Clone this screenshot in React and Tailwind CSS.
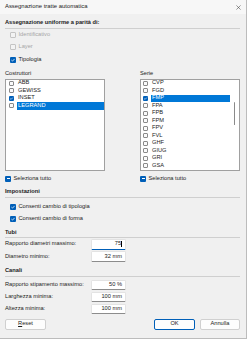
import React from "react";

function Check({ state = "off", disabled = false, size = 6 }) {
  const sz = size === 6 ? "w-[6px] h-[6px]" : "w-[5px] h-[5px]";
  if (state === "off") {
    return (
      <span
        className={`${sz} shrink-0 rounded-[1px] border-[0.7px] ${
          disabled ? "border-[#c4c4c4] bg-[#f3f3f3]" : "border-[#8a8a8a] bg-[#fafafa]"
        }`}
      />
    );
  }
  return (
    <span className={`${sz} shrink-0 rounded-[1px] bg-[#005fb8] flex items-center justify-center`}>
      {state === "on" ? (
        <svg viewBox="0 0 6 6" className="w-full h-full">
          <path d="M1.4 3.1 L2.5 4.1 L4.6 1.9" fill="none" stroke="white" strokeWidth="0.75" />
        </svg>
      ) : (
        <span className="w-[3px] h-[0.8px] bg-white" />
      )}
    </span>
  );
}

function Header({ children, className = "" }) {
  return (
    <div className={`h-[9.5px] flex items-center font-bold border-b border-[#cfcfcf] ${className}`}>
      {children}
    </div>
  );
}

function CheckRow({ label, state, disabled, h = "h-[12.5px]" }) {
  return (
    <div className={`${h} flex items-center pl-[5px] gap-[2.5px]`}>
      <Check state={state} disabled={disabled} />
      <span className={disabled ? "text-[#a6a6a6]" : ""}>{label}</span>
    </div>
  );
}

function ListRow({ label, checked, selected, pad }) {
  return (
    <div className={`h-[7.5px] flex items-center ${pad}`}>
      <Check state={checked ? "on" : "off"} size={5} />
      <span
        className={`ml-[3px] flex-1 h-full flex items-center pl-[1px] ${
          selected ? "bg-[#0078d7] text-white" : ""
        }`}
      >
        {label}
      </span>
    </div>
  );
}

function Field({ label, value, focused }) {
  return (
    <div className="h-[12.5px] flex items-center">
      <span className="w-[86px]">{label}</span>
      <div
        className={`w-[35px] h-[11px] bg-white rounded-[1.5px] border border-[#e3e3e3] flex items-center justify-end pr-[3px] ${
          focused ? "border-b-[#005fb8] border-b-[1.5px]" : "border-b-[#8c8c8c]"
        }`}
      >
        <span>{value}</span>
        {focused && <span className="w-[0.6px] h-[6px] bg-black ml-[0.3px]" />}
      </div>
    </div>
  );
}

function Field2({ label, value }) {
  return (
    <div className="h-[12px] flex items-center">
      <span className="w-[86px]">{label}</span>
      <div className="w-[35px] h-[10.5px] bg-white rounded-[1.5px] border border-[#e3e3e3] border-b-[#8c8c8c] flex items-center justify-end pr-[3px]">
        {value}
      </div>
    </div>
  );
}

export default function App() {
  const left = [
    { l: "ABB" },
    { l: "GEWISS" },
    { l: "INSET", c: true },
    { l: "LEGRAND", s: true },
  ];
  const right = [
    { l: "CVP" },
    { l: "FGD" },
    { l: "FMP", c: true, s: true },
    { l: "FPA" },
    { l: "FPB" },
    { l: "FPM" },
    { l: "FPV" },
    { l: "FVL" },
    { l: "GHF" },
    { l: "GIUG" },
    { l: "GRI" },
    { l: "GSA" },
  ];
  return (
    <div className="w-[248px] h-[340px] bg-white font-['Liberation_Sans',Arial,sans-serif] text-[5.7px] text-[#1b1b1b] leading-none">
      <div className="w-[247px] h-[339px] bg-[#f0f0f0] border-r border-b border-[#bcbcbc] flex flex-col">
        <div className="h-[14px] bg-[#f7f7f7] flex items-center justify-between pl-[5px] pr-[5px] shrink-0">
          <span className="text-[5.9px]">Assegnazione tratte automatica</span>
          <svg viewBox="0 0 6 6" className="w-[5px] h-[5px]">
            <path d="M0.5 0.5 L5.5 5.5 M5.5 0.5 L0.5 5.5" stroke="#333" strokeWidth="0.6" />
          </svg>
        </div>
        <div className="pl-[5px] w-[240px] flex flex-col">
          <Header className="mt-[5px]">Assegnazione uniforme a parità di:</Header>
          <CheckRow label="Identificativo" state="off" disabled />
          <CheckRow label="Layer" state="off" disabled />
          <CheckRow label="Tipologia" state="on" />

          <div className="grid grid-cols-[100px_100px] gap-x-[35px] mt-[3.5px]">
            <div className="flex flex-col">
              <div className="h-[8px] flex items-center">Costruttori</div>
              <div className="mt-[1px] h-[92px] bg-white border border-[#a0a0a0] flex flex-col">
                {left.map((r) => (
                  <ListRow key={r.l} label={r.l} checked={r.c} selected={r.s} pad="pl-[3px]" />
                ))}
              </div>
              <div className="mt-[4px] h-[8px] flex items-center gap-[2.5px]">
                <Check state="mixed" />
                <span>Seleziona tutto</span>
              </div>
            </div>
            <div className="flex flex-col">
              <div className="h-[8px] flex items-center">Serie</div>
              <div className="mt-[1px] h-[92px] bg-white border border-[#a0a0a0] flex">
                <div className="flex-1 flex flex-col">
                  {right.map((r) => (
                    <ListRow key={r.l} label={r.l} checked={r.c} selected={r.s} pad="pl-[2px]" />
                  ))}
                </div>
                <div className="w-[9px] relative">
                  <div className="absolute left-[3.5px] top-[22px] w-[1.2px] h-[23px] rounded-full bg-[#8a8a8a]" />
                </div>
              </div>
              <div className="mt-[4px] h-[8px] flex items-center gap-[2.5px]">
                <Check state="mixed" />
                <span>Seleziona tutto</span>
              </div>
            </div>
          </div>

          <Header className="mt-[5.5px]">Impostazioni</Header>
          <div className="mt-[3.5px]" />
          <CheckRow label="Consenti cambio di tipologia" state="on" h="h-[12px]" />
          <CheckRow label="Consenti cambio di forma" state="on" h="h-[12px]" />

          <Header className="mt-[3.5px]">Tubi</Header>
          <Field label="Rapporto diametri massimo:" value="75" focused />
          <Field label="Diametro minimo:" value="32 mm" />

          <Header className="mt-[4px]">Canali</Header>
          <div className="mt-[2.5px]" />
          <Field2 label="Rapporto stipamento massimo:" value="50 %" />
          <Field2 label="Larghezza minima:" value="100 mm" />
          <Field2 label="Altezza minima:" value="100 mm" />

          <div className="mt-[4px] flex items-center">
            <button className="w-[41px] h-[10.5px] bg-[#fdfdfd] border border-[#d0d0d0] rounded-[2px] flex items-center justify-center">
              <span><span className="underline">R</span>eset</span>
            </button>
            <button className="ml-auto w-[41px] h-[10.5px] bg-[#fdfdfd] border border-[#005fb8] rounded-[2px] flex items-center justify-center">
              OK
            </button>
            <button className="ml-[5px] w-[40px] h-[10.5px] bg-[#fdfdfd] border border-[#d0d0d0] rounded-[2px] flex items-center justify-center">
              Annulla
            </button>
          </div>
        </div>
      </div>
    </div>
  );
}
